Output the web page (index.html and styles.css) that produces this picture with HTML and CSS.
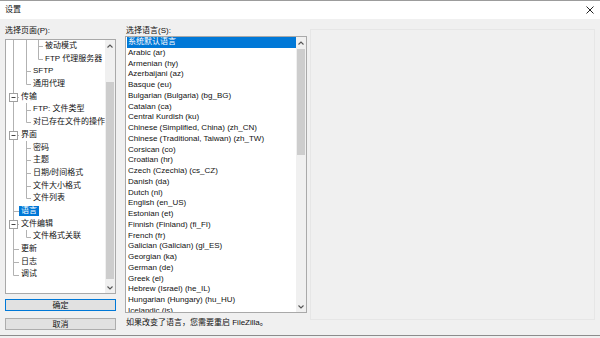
FILE: index.html
```html
<!DOCTYPE html>
<html>
<head>
<meta charset="utf-8">
<link rel="stylesheet" href="styles.css">
</head>
<body>
<div class="window">
  <div class="titlebar">
    <span class="title">设置</span>
    <svg class="close" width="8" height="8" viewBox="0 0 8 8"><path d="M0.5 0.5 L7.5 7.5 M7.5 0.5 L0.5 7.5" stroke="#222" stroke-width="1" fill="none"/></svg>
  </div>
  <div class="content">
    <div class="leftcol">
      <div class="label">选择页面(P):</div>
      <div class="tree">
        <div class="tree-items">
          <svg class="tree-lines" width="100" height="253" viewBox="0 0 100 253">
            <path fill="none" stroke="#b2b2b2" stroke-width="1" d="M7.5 0 V235.5 M7.5 171.5 H13 M7.5 209.5 H13 M7.5 222.5 H13 M7.5 235.5 H13 M11.5 57.5 H13 M11.5 95.5 H13 M11.5 184.5 H13 M20.5 0 V44.5 M20.5 31.5 H25 M20.5 44.5 H25 M20.5 63 V82.5 M20.5 70.5 H25 M20.5 82.5 H25 M20.5 101 V158.5 M20.5 108.5 H25 M20.5 120.5 H25 M20.5 133.5 H25 M20.5 146.5 H25 M20.5 158.5 H25 M20.5 190 V197.5 M20.5 197.5 H25 M32.5 0 V19.5 M32.5 6.5 H37 M32.5 19.5 H37"/>
            <g fill="#fff" stroke="#a0a0a0" stroke-width="1">
              <rect x="3.5" y="53.5" width="8" height="8"/>
              <rect x="3.5" y="91.5" width="8" height="8"/>
              <rect x="3.5" y="180.5" width="8" height="8"/>
            </g>
            <path fill="none" stroke="#444" stroke-width="1" d="M5.5 57.5 H9.5 M5.5 95.5 H9.5 M5.5 184.5 H9.5"/>
          </svg>
          <div class="node l3">被动模式</div>
          <div class="node l3">FTP 代理服务器</div>
          <div class="node l2">SFTP</div>
          <div class="node l2">通用代理</div>
          <div class="node l1">传输</div>
          <div class="node l2">FTP: 文件类型</div>
          <div class="node l2">对已存在文件的操作</div>
          <div class="node l1">界面</div>
          <div class="node l2">密码</div>
          <div class="node l2">主题</div>
          <div class="node l2">日期/时间格式</div>
          <div class="node l2">文件大小格式</div>
          <div class="node l2">文件列表</div>
          <div class="node l1"><span class="sel">语言</span></div>
          <div class="node l1">文件编辑</div>
          <div class="node l2">文件格式关联</div>
          <div class="node l1">更新</div>
          <div class="node l1">日志</div>
          <div class="node l1">调试</div>
        </div>
        <div class="vscroll">
          <div class="arrow"><svg width="6" height="4" viewBox="0 0 6 4"><polyline points="0.5,3.5 3,1 5.5,3.5" fill="none" stroke="#555" stroke-width="1.1"/></svg></div>
          <div class="track"><div class="thumb tree-thumb"></div></div>
          <div class="arrow"><svg width="6" height="4" viewBox="0 0 6 4"><polyline points="0.5,0.5 3,3 5.5,0.5" fill="none" stroke="#555" stroke-width="1.1"/></svg></div>
        </div>
      </div>
      <button class="btn default">确定</button>
      <button class="btn second">取消</button>
    </div>
    <div class="rightcol">
      <div class="label rlabel">选择语言(S):</div>
      <div class="list">
        <div class="list-items">
          <div class="row sel">系统默认语言</div>
          <div class="row">Arabic (ar)</div>
          <div class="row">Armenian (hy)</div>
          <div class="row">Azerbaijani (az)</div>
          <div class="row">Basque (eu)</div>
          <div class="row">Bulgarian (Bulgaria) (bg_BG)</div>
          <div class="row">Catalan (ca)</div>
          <div class="row">Central Kurdish (ku)</div>
          <div class="row">Chinese (Simplified, China) (zh_CN)</div>
          <div class="row">Chinese (Traditional, Taiwan) (zh_TW)</div>
          <div class="row">Corsican (co)</div>
          <div class="row">Croatian (hr)</div>
          <div class="row">Czech (Czechia) (cs_CZ)</div>
          <div class="row">Danish (da)</div>
          <div class="row">Dutch (nl)</div>
          <div class="row">English (en_US)</div>
          <div class="row">Estonian (et)</div>
          <div class="row">Finnish (Finland) (fi_FI)</div>
          <div class="row">French (fr)</div>
          <div class="row">Galician (Galician) (gl_ES)</div>
          <div class="row">Georgian (ka)</div>
          <div class="row">German (de)</div>
          <div class="row">Greek (el)</div>
          <div class="row">Hebrew (Israel) (he_IL)</div>
          <div class="row">Hungarian (Hungary) (hu_HU)</div>
          <div class="row">Icelandic (is)</div>
        </div>
        <div class="vscroll">
          <div class="arrow"><svg width="6" height="4" viewBox="0 0 6 4"><polyline points="0.5,3.5 3,1 5.5,3.5" fill="none" stroke="#555" stroke-width="1.1"/></svg></div>
          <div class="track"><div class="thumb list-thumb"></div></div>
          <div class="arrow"><svg width="6" height="4" viewBox="0 0 6 4"><polyline points="0.5,0.5 3,3 5.5,0.5" fill="none" stroke="#555" stroke-width="1.1"/></svg></div>
        </div>
      </div>
      <div class="hint">如果改变了语言，您需要重启 FileZilla。</div>
    </div>
    <div class="panel"></div>
  </div>
  <div class="bottomline"></div>
  <div class="bottomgap"></div>
</div>
</body>
</html>
```

FILE: styles.css
```css
* { box-sizing: border-box; }
html, body { margin: 0; padding: 0; }
body { width: 600px; height: 338px; overflow: hidden; background: #f0f0f0; }

.window {
  width: 600px;
  height: 338px;
  display: flex;
  flex-direction: column;
  background: #f0f0f0;
  border-top: 1px solid #9c9c9c;
  font-family: "Liberation Sans", "Noto Sans CJK SC", sans-serif;
  font-size: 8px;
  color: #111;
  overflow: hidden;
}

.titlebar {
  height: 18px;
  flex: none;
  background: #fff;
  display: flex;
  align-items: center;
  justify-content: space-between;
  padding: 0 6px 0 5px;
}
.title { line-height: 10px; }
.close { display: block; }

.content {
  flex: none;
  height: 316px;
  display: flex;
  padding: 6px 5px 0 5px;
}

.leftcol {
  width: 111px;
  flex: none;
  display: flex;
  flex-direction: column;
}
.label {
  height: 11px;
  line-height: 11px;
  white-space: nowrap;
  margin-bottom: 3px;
}
.rlabel { margin-bottom: 0; padding-left: 1px; }

.tree {
  height: 255px;
  flex: none;
  border: 1px solid #a9a9a9;
  background: #fff;
  display: flex;
}
.tree-items {
  flex: 1;
  position: relative;
  overflow: hidden;
}
.tree-lines {
  position: absolute;
  left: 0;
  top: 0;
  pointer-events: none;
}
.node {
  position: relative;
  height: 12.7px;
  line-height: 12.7px;
  white-space: nowrap;
}
.l1 { padding-left: 15px; }
.l2 { padding-left: 27px; }
.l3 { padding-left: 39px; }
.node .sel {
  display: inline-block;
  background: #0078d7;
  color: #fff;
  line-height: 10px;
  padding: 0 2px;
  margin-left: -2px;
}

.vscroll {
  width: 10px;
  flex: none;
  background: #f0f0f0;
  display: flex;
  flex-direction: column;
}
.arrow {
  height: 11px;
  flex: none;
  display: flex;
  align-items: center;
  justify-content: center;
}
.arrow svg { display: block; }
.track { flex: 1; }
.thumb { background: #cdcdcd; margin: 0 1px; }
.tree-thumb { margin-top: 31px; height: 197px; }
.list-thumb { margin-top: 1px; height: 106px; }

.btn {
  display: block;
  width: 111px;
  height: 12px;
  margin: 5px 0 0 0;
  padding: 0;
  background: #e1e1e1;
  border: 1px solid #adadad;
  font-family: "Liberation Sans", "Noto Sans CJK SC", sans-serif;
  font-size: 8px;
  line-height: 9px;
  color: #111;
}
.btn.default { border-color: #0078d7; }
.btn.second { margin-top: 7px; }

.rightcol {
  width: 182px;
  flex: none;
  margin-left: 9px;
  display: flex;
  flex-direction: column;
}
.list {
  height: 277px;
  flex: none;
  border: 1px solid #a9a9a9;
  background: #fff;
  display: flex;
}
.list-items {
  flex: 1;
  overflow: hidden;
  padding-left: 1px;
}
.row {
  height: 10.75px;
  line-height: 10.75px;
  padding-left: 1px;
  white-space: nowrap;
}
.row.sel { background: #0078d7; color: #fff; }

.hint {
  margin-top: 4px;
  height: 11px;
  line-height: 11px;
  padding-left: 1px;
  white-space: nowrap;
}

.panel {
  flex: 1;
  margin-left: 3px;
  margin-top: 4px;
  height: 291px;
  border: 1px solid #e6e6e6;
}

.bottomline { height: 1px; flex: none; background: #8c8c8c; }
.bottomgap { height: 2px; flex: none; background: #f0f0f0; }
```
